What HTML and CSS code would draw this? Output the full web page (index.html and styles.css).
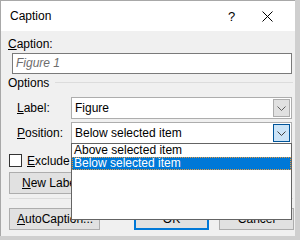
FILE: index.html
```html
<!DOCTYPE html>
<html lang="en">
<head>
    <meta charset="UTF-8">
    <title>Caption</title>
    <link rel="stylesheet" href="styles.css">
</head>
<body>
    <div class="dialog">
        <div class="titlebar">
            <span class="title">Caption</span>
            <span class="help">?</span>
            <span class="close">
                <svg width="11" height="11" viewBox="0 0 11 11"><path d="M0.5 0.5 L10.5 10.5 M10.5 0.5 L0.5 10.5" stroke="#000" stroke-width="1"/></svg>
            </span>
        </div>
        <div class="content">
            <div class="field-label"><u>C</u>aption:</div>
            <div class="text-input">Figure 1</div>

            <div class="group-title">
                <span>Options</span>
                <div class="group-line"></div>
            </div>

            <div class="form-row row-label">
                <span class="row-name"><u>L</u>abel:</span>
                <div class="select">
                    <span class="select-text">Figure</span>
                    <span class="select-btn">
                        <svg width="9" height="5" viewBox="0 0 9 5"><path d="M0.5 0.5 L4.5 4.5 L8.5 0.5" fill="none" stroke="#606060"/></svg>
                    </span>
                </div>
            </div>
            <div class="form-row row-position">
                <span class="row-name"><u>P</u>osition:</span>
                <div class="select">
                    <span class="select-text">Below selected item</span>
                    <span class="select-btn active">
                        <svg width="9" height="5" viewBox="0 0 9 5"><path d="M0.5 0.5 L4.5 4.5 L8.5 0.5" fill="none" stroke="#404040"/></svg>
                    </span>
                </div>
            </div>

            <!-- o que fica atrás da lista aberta é cortado -->
            <div class="behind">
                <label class="check-row">
                    <span class="checkbox"></span>
                    <span class="check-text"><u>E</u>xclude l</span>
                </label>

                <div class="btn-row">
                    <button class="btn btn-new"><u>N</u>ew Labe</button>
                </div>
            </div>

            <div class="separator"></div>

            <div class="btn-row bottom">
                <button class="btn btn-auto"><u>A</u>utoCaption...</button>
                <button class="btn btn-ok">OK</button>
                <button class="btn btn-cancel">Cancel</button>
            </div>

            <!-- lista aberta do Position -->
            <div class="dropdown-list">
                <div class="list-item">Above selected item</div>
                <div class="list-item selected">Below selected item</div>
            </div>
        </div>
    </div>
</body>
</html>
```

FILE: styles.css
```css
/* Reset */
* {
    margin: 0;
    padding: 0;
    box-sizing: border-box;
}

body {
    font-family: 'Liberation Sans', Arial, sans-serif;
    font-size: 12px;
    background-color: #cfcfcf;
    color: #000;
    width: 300px;
    height: 240px;
    overflow: hidden;
}

.dialog {
    width: 295px;
    height: 236px;
    background-color: #f0f0f0;
    border: 1px solid #a8a8a8;
    border-right: none;
    border-bottom: none;
    display: flex;
    flex-direction: column;
}

.titlebar {
    height: 30px;
    background-color: #fff;
    display: flex;
    align-items: center;
    padding-left: 9px;
}

.title {
    flex: 1;
}

.help {
    width: 12px;
    margin-right: 22px;
    font-size: 13px;
}

.close {
    width: 11px;
    height: 11px;
    margin-right: 22px;
    display: flex;
}

.content {
    position: relative;
    flex: 1;
    padding: 6px 0 0 7px;
}

.field-label {
    height: 15px;
    line-height: 15px;
}

.text-input {
    margin: 1px 0 0 4px;
    width: 280px;
    height: 21px;
    background-color: #fff;
    border: 1px solid #7a7a7a;
    padding-left: 3px;
    line-height: 19px;
    font-style: italic;
    color: #6d6d6d;
}

.group-title {
    display: flex;
    align-items: center;
    height: 15px;
    margin-top: 1px;
    gap: 6px;
}

.group-line {
    flex: 1;
    height: 1px;
    background-color: #dcdcdc;
    margin-right: 2px;
}

.form-row {
    display: flex;
    align-items: center;
    height: 22px;
}

.row-label {
    margin-top: 7px;
}

.row-position {
    margin-top: 3px;
}

.row-name {
    width: 63px;
    padding-left: 9px;
}

.select {
    width: 221px;
    height: 22px;
    background-color: #fff;
    border: 1px solid #adadad;
    display: flex;
    align-items: center;
    padding: 0 1px 0 3px;
}

.select-text {
    flex: 1;
}

.select-btn {
    width: 17px;
    height: 18px;
    background-color: #e1e1e1;
    border: 1px solid #adadad;
    display: flex;
    align-items: center;
    justify-content: center;
}

.select-btn.active {
    background-color: #cce4f7;
    border-color: #005499;
}

.behind {
    width: 63px;
    overflow: hidden;
}

.check-row {
    display: flex;
    align-items: center;
    gap: 5px;
    margin: 10px 0 0 1px;
    height: 13px;
    white-space: nowrap;
}

.checkbox {
    flex: none;
    width: 13px;
    height: 13px;
    background-color: #fff;
    border: 1px solid #333;
}

.btn-row {
    display: flex;
    gap: 10px;
    margin: 5px 0 0 1px;
}

.btn {
    font-family: inherit;
    font-size: 12px;
    height: 22px;
    background-color: #e1e1e1;
    border: 1px solid #adadad;
    color: #000;
    white-space: nowrap;
}

.btn-new {
    flex: none;
    width: 91px;
    text-align: left;
    padding-left: 12px;
}

.separator {
    height: 1px;
    background-color: #dcdcdc;
    margin: 4px 2px 0 1px;
}

.bottom {
    margin-top: 9px;
}

.btn-auto {
    width: 91px;
    text-align: left;
    padding-left: 7px;
}

.btn-ok {
    width: 75px;
    margin-left: 24px;
    border: 2px solid #0078d7;
}

.btn-cancel {
    width: 75px;
}

.dropdown-list {
    position: absolute;
    left: 70px;
    top: 112px;
    width: 221px;
    height: 77px;
    background-color: #fff;
    border: 1px solid #646464;
}

.list-item {
    height: 13px;
    line-height: 13px;
    padding-left: 2px;
}

.list-item.selected {
    background-color: #0078d7;
    color: #fff;
    outline: 1px dotted #e89a3c;
    outline-offset: -1px;
}
```
